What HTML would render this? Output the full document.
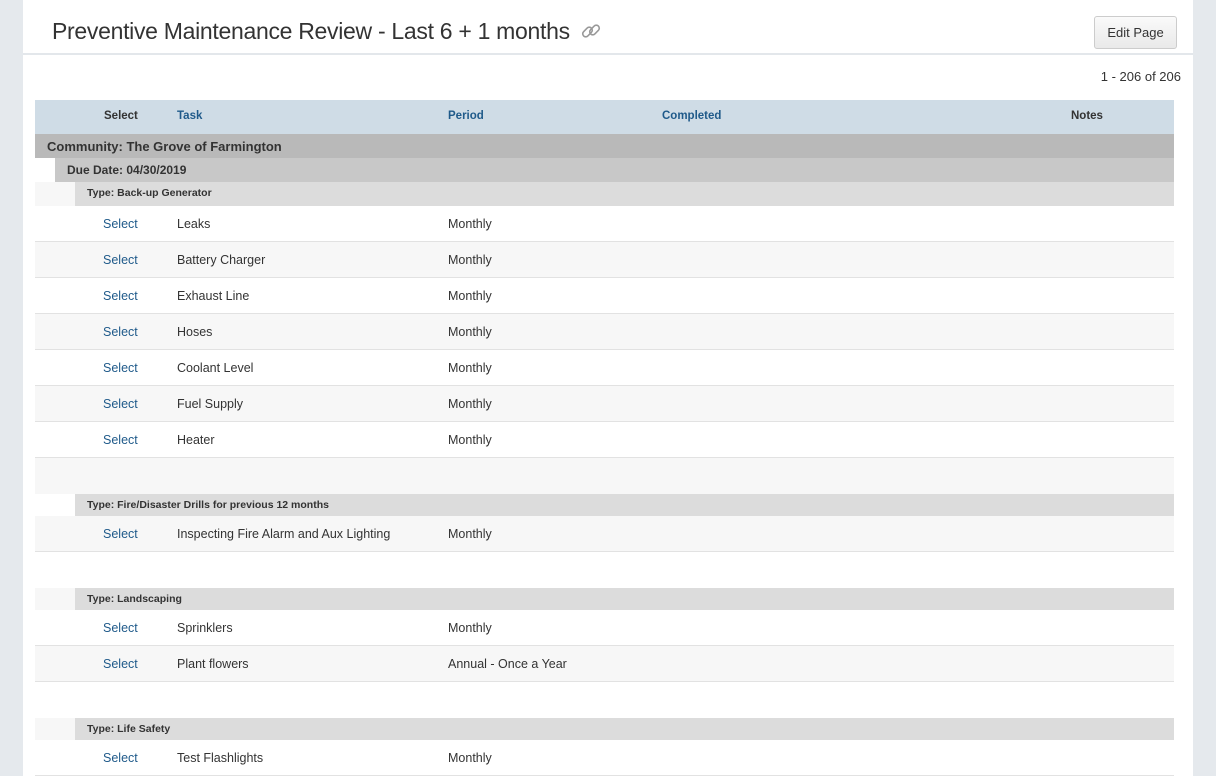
<!DOCTYPE html>
<html><head><style>
*{margin:0;padding:0;box-sizing:border-box}
body{width:1216px;height:776px;overflow:hidden;background:#e5e9ed;font-family:"Liberation Sans",sans-serif;color:#333}
.panel{position:absolute;left:23px;top:0;width:1170px;height:776px;background:#fff}
.hdr{height:55px;border-bottom:2px solid #e3e7eb;position:relative}
h1{position:absolute;left:29px;top:18px;font-weight:normal;font-size:23px;color:#333;letter-spacing:-0.3px}
.btn{position:absolute;left:1071px;top:16px;width:83px;height:33px;border:1px solid #ccc;border-radius:3px;background:linear-gradient(#fafafa,#e9e9e9);font-size:13px;text-align:center;line-height:31px;color:#333}
.count{position:absolute;right:12px;top:69px;font-size:13px}
.t{position:absolute;left:12px;top:100px;width:1139px}
.r{position:relative;height:36px;font-size:12.5px;border-bottom:1px solid #e2e2e2}
.r span{position:absolute;top:11px}
.g{background:#f7f7f7}
.th{height:34px;background:#cfdce6;font-size:11.5px;font-weight:bold;border:0}
.th span{top:10px}
.bl{color:#1f5a8a}
.c{height:24px;background:#b9b9b9;font-weight:bold;font-size:13px;padding:5px 12px;color:#333}
.d{height:24px;background:#fff;padding-left:20px}
.d div{height:24px;background:#c8c8c8;font-weight:bold;font-size:12px;padding:5px 12px}
.ty{height:22px;padding-left:40px;background:#fff}
.ty div{height:22px;background:#dcdcdc;font-weight:bold;font-size:10.5px;padding:5px 12px}
</style></head><body>
<div class="panel">
<div class="hdr"><h1>Preventive Maintenance Review - Last 6 + 1 months <svg width="22" height="22" viewBox="0 0 22 22" style="vertical-align:-3px;margin-left:4px"><g fill="none" stroke="#999" stroke-width="1.6"><rect x="2" y="9" width="11" height="6" rx="3" transform="rotate(-45 7.5 12)"/><rect x="9" y="7" width="11" height="6" rx="3" transform="rotate(-45 14.5 10)"/></g></svg></h1><div class="btn">Edit Page</div></div>
<div class="count">1 - 206 of 206</div>
<div class="t">
<div class="r th"><span style="left:69px">Select</span><span class="bl" style="left:142px">Task</span><span class="bl" style="left:413px">Period</span><span class="bl" style="left:627px">Completed</span><span style="left:1036px">Notes</span></div>
<div class="c">Community: The Grove of Farmington</div>
<div class="d"><div>Due Date: 04/30/2019</div></div>
<div class="ty" style="background:#f7f7f7;height:24px"><div style="height:24px">Type: Back-up Generator</div></div>
<div class="r"><span class="bl" style="left:68px">Select</span><span style="left:142px">Leaks</span><span style="left:413px">Monthly</span></div>
<div class="r g"><span class="bl" style="left:68px">Select</span><span style="left:142px">Battery Charger</span><span style="left:413px">Monthly</span></div>
<div class="r"><span class="bl" style="left:68px">Select</span><span style="left:142px">Exhaust Line</span><span style="left:413px">Monthly</span></div>
<div class="r g"><span class="bl" style="left:68px">Select</span><span style="left:142px">Hoses</span><span style="left:413px">Monthly</span></div>
<div class="r"><span class="bl" style="left:68px">Select</span><span style="left:142px">Coolant Level</span><span style="left:413px">Monthly</span></div>
<div class="r g"><span class="bl" style="left:68px">Select</span><span style="left:142px">Fuel Supply</span><span style="left:413px">Monthly</span></div>
<div class="r"><span class="bl" style="left:68px">Select</span><span style="left:142px">Heater</span><span style="left:413px">Monthly</span></div>
<div class="r g" style="border:0"></div>
<div class="ty"><div>Type: Fire/Disaster Drills for previous 12 months</div></div>
<div class="r g"><span class="bl" style="left:68px">Select</span><span style="left:142px">Inspecting Fire Alarm and Aux Lighting</span><span style="left:413px">Monthly</span></div>
<div class="r" style="border:0"></div>
<div class="ty" style="background:#f7f7f7"><div>Type: Landscaping</div></div>
<div class="r"><span class="bl" style="left:68px">Select</span><span style="left:142px">Sprinklers</span><span style="left:413px">Monthly</span></div>
<div class="r g"><span class="bl" style="left:68px">Select</span><span style="left:142px">Plant flowers</span><span style="left:413px">Annual - Once a Year</span></div>
<div class="r" style="border:0"></div>
<div class="ty" style="background:#f7f7f7"><div>Type: Life Safety</div></div>
<div class="r"><span class="bl" style="left:68px">Select</span><span style="left:142px">Test Flashlights</span><span style="left:413px">Monthly</span></div>
</div>
</div>
</body></html>
